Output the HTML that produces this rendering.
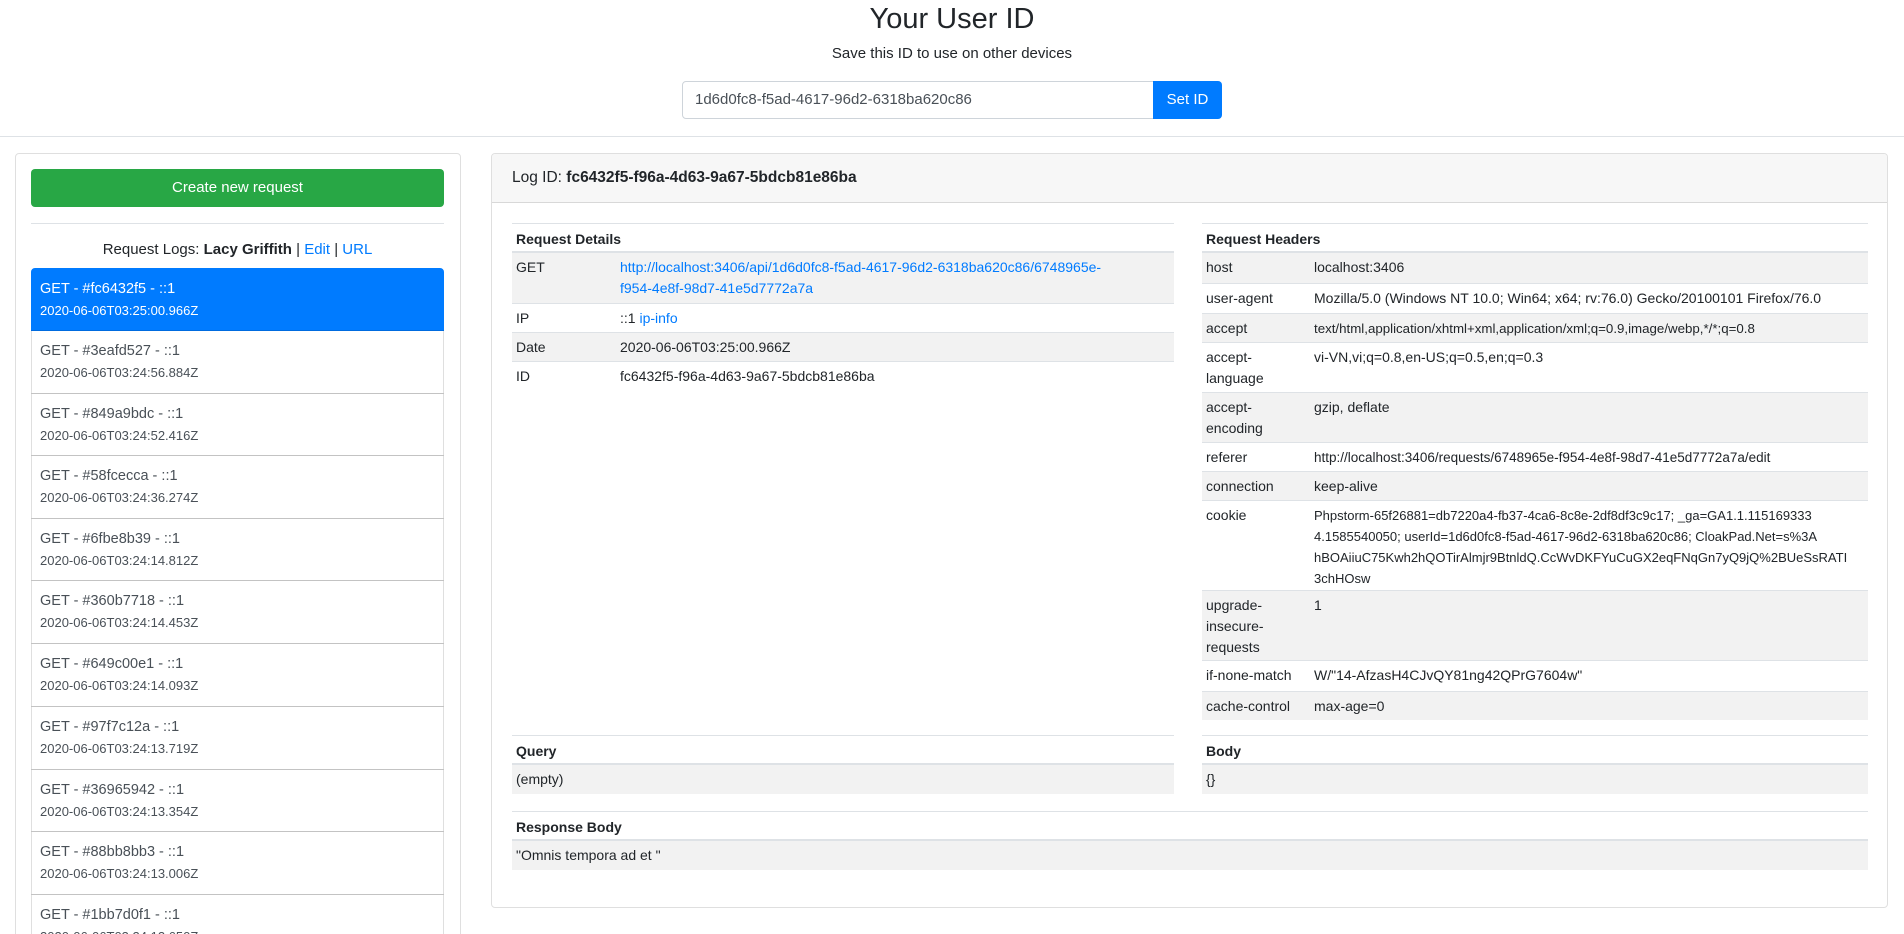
<!DOCTYPE html>
<html><head><meta charset="utf-8"><style>
*{box-sizing:border-box;margin:0;padding:0}
html,body{width:1904px;height:934px;overflow:hidden}
body{background:#fff;font-family:"Liberation Sans",sans-serif;color:#212529;position:relative}
.a{position:absolute}
a{color:#007bff;text-decoration:none}
h2{position:absolute;top:0;left:0;width:1904px;text-align:center;font-weight:400;font-size:29px;line-height:38px}
.sub{top:43px;left:0;width:1904px;text-align:center;font-size:15px;line-height:22px}
.inp{left:682px;top:81px;width:472px;height:38px;border:1px solid #ced4da;border-radius:4px 0 0 4px;font-size:15px;line-height:36px;padding-left:12px;color:#495057}
.btn{left:1153px;top:81px;width:69px;height:38px;background:#007bff;color:#fff;border-radius:0 4px 4px 0;font-size:15px;line-height:38px;text-align:center}
.hr{left:0;top:136px;width:1904px;height:1px;background:#dee2e6}
.card{border:1px solid rgba(0,0,0,.125);border-radius:4px}
.clip{position:absolute;left:0;top:0;width:1904px;height:934px;overflow:hidden}
.item{position:absolute;left:31px;width:413px;border:1px solid rgba(0,0,0,.125);padding:9px 8px;color:#495057}
.item .l1{font-size:14.5px;line-height:22px}
.item .l2{font-size:13px;line-height:22px}
.item.act{background:#007bff;color:#fff;border-color:#007bff;border-radius:4px 4px 0 0}
.t{position:absolute;font-size:14px;line-height:21px}
.h{height:30px;border-top:1px solid #dee2e6;border-bottom:2px solid #dee2e6;font-weight:700;padding:5px 4px 0}
.r{display:flex;border-top:1px solid #dee2e6;overflow:hidden}
.r>div{padding:4px}
.s{background:#f2f2f2}
</style></head><body>
<h2>Your User ID</h2>
<div class="a sub">Save this ID to use on other devices</div>
<div class="a inp">1d6d0fc8-f5ad-4617-96d2-6318ba620c86</div>
<div class="a btn">Set ID</div>
<div class="a hr"></div>

<div class="clip">
<div class="a card" style="left:15px;top:153px;width:446px;height:900px"></div>
<div class="a" style="left:31px;top:169px;width:413px;height:38px;background:#28a745;border-radius:4px;color:#fff;text-align:center;font-size:15px;line-height:38px">Create new request</div>
<div class="a" style="left:31px;top:223px;width:413px;height:1px;background:#dee2e6"></div>
<div class="a" style="left:31px;top:239px;width:413px;text-align:center;font-size:15px;line-height:22px">Request Logs: <b>Lacy Griffith</b> | <a>Edit</a> | <a>URL</a></div>

<div class="item act" style="top:268px;height:63px"><div class="l1">GET - #fc6432f5 - ::1</div><div class="l2">2020-06-06T03:25:00.966Z</div></div>
<div class="item" style="top:330px;height:64px"><div class="l1">GET - #3eafd527 - ::1</div><div class="l2">2020-06-06T03:24:56.884Z</div></div>
<div class="item" style="top:393px;height:63px"><div class="l1">GET - #849a9bdc - ::1</div><div class="l2">2020-06-06T03:24:52.416Z</div></div>
<div class="item" style="top:455px;height:64px"><div class="l1">GET - #58fcecca - ::1</div><div class="l2">2020-06-06T03:24:36.274Z</div></div>
<div class="item" style="top:518px;height:63px"><div class="l1">GET - #6fbe8b39 - ::1</div><div class="l2">2020-06-06T03:24:14.812Z</div></div>
<div class="item" style="top:580px;height:64px"><div class="l1">GET - #360b7718 - ::1</div><div class="l2">2020-06-06T03:24:14.453Z</div></div>
<div class="item" style="top:643px;height:64px"><div class="l1">GET - #649c00e1 - ::1</div><div class="l2">2020-06-06T03:24:14.093Z</div></div>
<div class="item" style="top:706px;height:64px"><div class="l1">GET - #97f7c12a - ::1</div><div class="l2">2020-06-06T03:24:13.719Z</div></div>
<div class="item" style="top:769px;height:63px"><div class="l1">GET - #36965942 - ::1</div><div class="l2">2020-06-06T03:24:13.354Z</div></div>
<div class="item" style="top:831px;height:64px"><div class="l1">GET - #88bb8bb3 - ::1</div><div class="l2">2020-06-06T03:24:13.006Z</div></div>
<div class="item" style="top:894px;height:64px"><div class="l1">GET - #1bb7d0f1 - ::1</div><div class="l2">2020-06-06T03:24:12.650Z</div></div>
</div>

<div class="a card" style="left:491px;top:153px;width:1397px;height:755px;overflow:hidden">
<div style="height:49px;background:#f7f7f7;border-bottom:1px solid rgba(0,0,0,.125);padding-left:20px;font-size:15.5px;line-height:48px">Log ID: <b>fc6432f5-f96a-4d63-9a67-5bdcb81e86ba</b></div>
</div>

<div class="t" style="left:512px;top:223px;width:662px">
<div class="h">Request Details</div>
<div class="r s" style="height:50px;border-top:none"><div style="width:104px">GET</div><div><a>http://localhost:3406/api/1d6d0fc8-f5ad-4617-96d2-6318ba620c86/6748965e-<br>f954-4e8f-98d7-41e5d7772a7a</a></div></div>
<div class="r" style="height:29px"><div style="width:104px">IP</div><div>::1 <a>ip-info</a></div></div>
<div class="r s" style="height:29px"><div style="width:104px">Date</div><div>2020-06-06T03:25:00.966Z</div></div>
<div class="r" style="height:29px"><div style="width:104px">ID</div><div>fc6432f5-f96a-4d63-9a67-5bdcb81e86ba</div></div>
</div>

<div class="t" style="left:1202px;top:223px;width:666px">
<div class="h">Request Headers</div>
<div class="r s" style="height:30px;border-top:none"><div style="width:108px">host</div><div>localhost:3406</div></div>
<div class="r" style="height:30px"><div style="width:108px">user-agent</div><div>Mozilla/5.0 (Windows NT 10.0; Win64; x64; rv:76.0) Gecko/20100101 Firefox/76.0</div></div>
<div class="r s" style="height:29px"><div style="width:108px">accept</div><div style="font-size:13.3px">text/html,application/xhtml+xml,application/xml;q=0.9,image/webp,*/*;q=0.8</div></div>
<div class="r" style="height:50px"><div style="width:108px">accept-<br>language</div><div>vi-VN,vi;q=0.8,en-US;q=0.5,en;q=0.3</div></div>
<div class="r s" style="height:50px"><div style="width:108px">accept-<br>encoding</div><div>gzip, deflate</div></div>
<div class="r" style="height:29px"><div style="width:108px">referer</div><div style="font-size:13.5px">http://localhost:3406/requests/6748965e-f954-4e8f-98d7-41e5d7772a7a/edit</div></div>
<div class="r s" style="height:29px"><div style="width:108px">connection</div><div>keep-alive</div></div>
<div class="r" style="height:90px"><div style="width:108px">cookie</div><div style="font-size:13px">Phpstorm-65f26881=db7220a4-fb37-4ca6-8c8e-2df8df3c9c17; _ga=GA1.1.115169333<br>4.1585540050; userId=1d6d0fc8-f5ad-4617-96d2-6318ba620c86; CloakPad.Net=s%3A<br>hBOAiiuC75Kwh2hQOTirAlmjr9BtnldQ.CcWvDKFYuCuGX2eqFNqGn7yQ9jQ%2BUeSsRATI<br>3chHOsw</div></div>
<div class="r s" style="height:70px"><div style="width:108px">upgrade-<br>insecure-<br>requests</div><div>1</div></div>
<div class="r" style="height:31px"><div style="width:108px">if-none-match</div><div>W/"14-AfzasH4CJvQY81ng42QPrG7604w"</div></div>
<div class="r s" style="height:29px"><div style="width:108px">cache-control</div><div>max-age=0</div></div>
</div>

<div class="t" style="left:512px;top:735px;width:662px">
<div class="h">Query</div>
<div class="r s" style="height:29px;border-top:none"><div>(empty)</div></div>
</div>
<div class="t" style="left:1202px;top:735px;width:666px">
<div class="h">Body</div>
<div class="r s" style="height:29px;border-top:none"><div>{}</div></div>
</div>
<div class="t" style="left:512px;top:811px;width:1356px">
<div class="h">Response Body</div>
<div class="r s" style="height:29px;border-top:none"><div>"Omnis tempora ad et "</div></div>
</div>
</body></html>
